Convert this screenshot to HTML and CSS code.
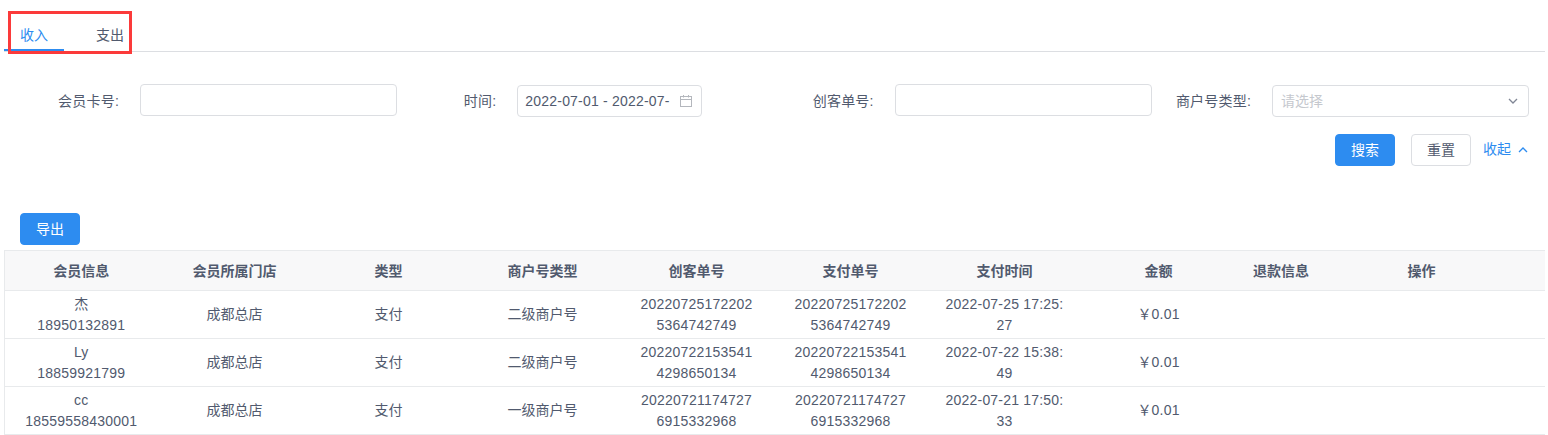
FILE: index.html
```
<!DOCTYPE html>
<html lang="zh-CN">
<head>
<meta charset="utf-8">
<title>收入</title>
<link rel="stylesheet" href="styles.css">
</head>
<body>
<div class="page">
  <div class="tabs">
    <div class="tab active">收入</div>
    <div class="tab">支出</div>
    <div class="mark"></div>
  </div>
  <form class="filters">
    <div class="field"><label>会员卡号:</label><input class="control text" type="text"></div>
    <div class="field"><label>时间:</label>
      <div class="control date"><span class="date-text num">2022-07-01 - 2022-07-</span>
        <svg class="cal" width="14" height="14" viewBox="0 0 14 14" fill="none" stroke="#b4b7bd" stroke-width="1"><rect x="1.500" y="2.500" width="11" height="10"/><path d="M1.500 5.500h11M4.500 1v2.500M9.500 1v2.500"/></svg>
      </div>
    </div>
    <div class="field"><label>创客单号:</label><input class="control text" type="text"></div>
    <div class="field"><label>商户号类型:</label>
      <div class="control select"><span class="placeholder">请选择</span>
        <svg width="10" height="6" viewBox="0 0 10 6" fill="none" stroke="#808695" stroke-width="1.300"><path d="M1 1l4 4 4-4"/></svg>
      </div>
    </div>
  </form>
  <div class="actions">
    <button class="btn primary" type="button">搜索</button>
    <button class="btn" type="button">重置</button>
    <a class="toggle">收起<svg width="10" height="6" viewBox="0 0 10 6" fill="none" stroke="#2d8cf0" stroke-width="1.300"><path d="M1 5l4-4 4 4"/></svg></a>
  </div>
  <div class="export"><button class="btn primary" type="button">导出</button></div>
  <table class="grid">
    <colgroup>
      <col class="c153"><col class="c154"><col class="c154"><col class="c154"><col class="c154"><col class="c154"><col class="c154"><col class="c154"><col class="c91"><col class="c190"><col>
    </colgroup>
    <thead>
      <tr><th>会员信息</th><th>会员所属门店</th><th>类型</th><th>商户号类型</th><th>创客单号</th><th>支付单号</th><th>支付时间</th><th>金额</th><th>退款信息</th><th>操作</th><th></th></tr>
    </thead>
    <tbody>
      <tr><td class="num">杰<br>18950132891</td><td>成都总店</td><td>支付</td><td>二级商户号</td><td class="num">20220725172202<br>5364742749</td><td class="num">20220725172202<br>5364742749</td><td class="num">2022-07-25 17:25:<br>27</td><td class="num">￥0.01</td><td></td><td></td><td></td></tr>
      <tr><td class="num">Ly<br>18859921799</td><td>成都总店</td><td>支付</td><td>二级商户号</td><td class="num">20220722153541<br>4298650134</td><td class="num">20220722153541<br>4298650134</td><td class="num">2022-07-22 15:38:<br>49</td><td class="num">￥0.01</td><td></td><td></td><td></td></tr>
      <tr><td class="num">cc<br>18559558430001</td><td>成都总店</td><td>支付</td><td>一级商户号</td><td class="num">20220721174727<br>6915332968</td><td class="num">20220721174727<br>6915332968</td><td class="num">2022-07-21 17:50:<br>33</td><td class="num">￥0.01</td><td></td><td></td><td></td></tr>
    </tbody>
  </table>
</div>
</body>
</html>
```
FILE: styles.css
```
* { box-sizing: border-box; }
html, body { margin: 0; padding: 0; background: #fff; }
body {
  font-family: "Liberation Sans", "Noto Sans CJK SC", sans-serif;
  font-size: 14px;
  color: #515a6e;
  overflow: hidden;
}
.page { padding: 0 3px 0 4px; }
.tabs {
  position: relative;
  display: flex;
  gap: 16px;
  height: 52px;
  padding-top: 17px;
  border-bottom: 1px solid #dcdee2;
}
.tab { width: 60px; height: 34px; line-height: 36px; text-align: center; }
.tab.active { color: #2d8cf0; border-bottom: 2px solid #2d8cf0; }
.mark {
  position: absolute;
  left: 4px;
  top: 11px;
  width: 124px;
  height: 43px;
  border: 3px solid #fb3a3a;
}
.num { letter-spacing: 0.2px; }
.filters {
  display: grid;
  grid-template-columns: repeat(4, 377.33px);
  margin: 33px 0 0 16px;
}
.field { display: flex; align-items: center; height: 32px; }
.field label { width: 120px; padding: 0 21px 2px 0; letter-spacing: 0.2px; text-align: right; flex: none; }
.control {
  width: 257px;
  height: 32px;
  border: 1px solid #dcdee2;
  border-radius: 4px;
  background: #fff;
  font: inherit;
  color: inherit;
}
.text { margin-bottom: 2px; }
.date {
  width: 185px;
  display: flex;
  align-items: center;
  justify-content: space-between;
  padding: 0 8px 0 7px;
}
.select {
  display: flex;
  align-items: center;
  justify-content: space-between;
  padding: 0 10px 0 8px;
}
.placeholder { color: #c5c8ce; padding-bottom: 2px; }
.actions {
  display: flex;
  justify-content: flex-end;
  align-items: center;
  margin-top: 17px;
  padding-right: 16px;
}
.btn {
  width: 60px;
  height: 32px;
  border: 1px solid #dcdee2;
  border-radius: 4px;
  background: #fff;
  font: inherit;
  color: inherit;
  padding: 0 0 2px;
}
.btn.primary { background: #2d8cf0; border-color: #2d8cf0; color: #fff; }
.actions .btn { margin-right: 16px; }
.actions .btn:nth-child(2) { margin-right: 12px; }
.toggle { display: flex; align-items: center; gap: 7px; color: #2d8cf0; width: 46px; height: 32px; padding-bottom: 4px; }
.toggle svg { margin-top: 4px; }
.export { margin: 47px 0 5px 16px; height: 32px; }
.grid {
  width: 1541px;
  table-layout: fixed;
  border-collapse: collapse;
  border: 1px solid #e8eaec;
  border-right: 0;
}
.c153 { width: 153px; }
.c154 { width: 154px; }
.c91 { width: 91px; }
.c190 { width: 190px; }
.grid th {
  height: 40px;
  padding: 0 0 2px;
  background: #f8f8f9;
  font-weight: 700;
  border-bottom: 1px solid #e8eaec;
}
.grid td {
  height: 48px;
  padding: 0 18px;
  line-height: 21px;
  text-align: center;
  border-bottom: 1px solid #e8eaec;
  white-space: nowrap;
}
```
